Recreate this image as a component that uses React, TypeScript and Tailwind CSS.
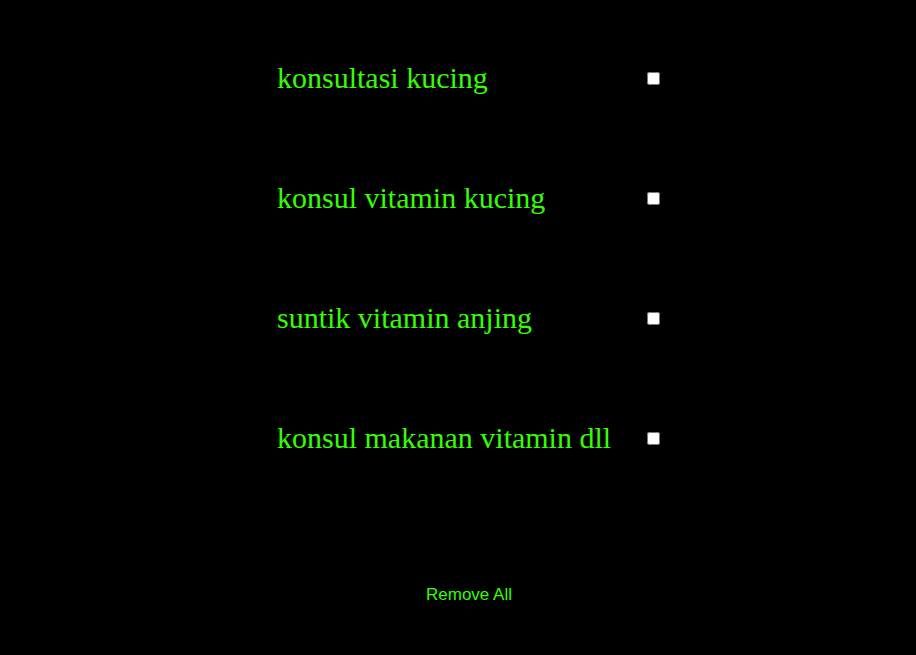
import React from "react";

const items = ["konsultasi kucing", "konsul vitamin kucing", "suntik vitamin anjing", "konsul makanan vitamin dll"];

export default function App() {
  return (
    <div className="min-h-[655px] w-full bg-black flex flex-col items-center pl-[22px]">
      <div className="flex flex-col pt-[54px] gap-[72px]">
        {items.map((t) => (
          <div key={t} className="w-[384px] h-[48px] flex items-center justify-between">
            <span className="text-[30px] leading-[48px] text-[#33ff00]" style={{ fontFamily: '"Liberation Serif", serif' }}>{t}</span>
            <input type="checkbox" className="w-[13px] h-[13px] m-0 mr-[1px]" />
          </div>
        ))}
      </div>
      <button className="mt-[120px] text-[17px] text-[#33ff00] bg-transparent" style={{ fontFamily: '"Liberation Sans", Arial, sans-serif' }}>Remove All</button>
    </div>
  );
}
